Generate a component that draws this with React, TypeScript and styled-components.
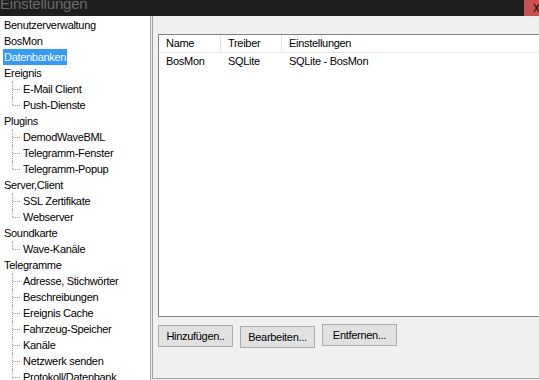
import React from 'react';
import styled, { createGlobalStyle } from 'styled-components';

const GlobalStyle = createGlobalStyle`
  html, body {
    margin: 0;
    padding: 0;
    overflow: hidden;
    background: #f0f0f0;
  }
  * {
    box-sizing: border-box;
  }
`;

const Window = styled.div`
  width: 539px;
  height: 380px;
  display: flex;
  flex-direction: column;
  font-family: 'Liberation Sans', Arial, sans-serif;
  font-size: 11px;
  letter-spacing: -0.3px;
  color: #000;
  overflow: hidden;
`;

const TitleBar = styled.div`
  height: 16px;
  flex: none;
  display: flex;
  background: #1f1f1f;
  overflow: hidden;
`;

const TitleText = styled.div`
  flex: 1;
  margin-top: -5px;
  font-size: 15px;
  letter-spacing: -0.2px;
  line-height: 18px;
  color: #6a6a6a;
  white-space: nowrap;
`;

const CloseButton = styled.div`
  width: 15px;
  background: #c75050;
  color: #111;
  font-size: 14px;
  line-height: 14px;
  padding-left: 9px;
  overflow: hidden;
`;

const Body = styled.div`
  flex: 1;
  display: flex;
  min-height: 0;
`;

const Tree = styled.div`
  width: 151px;
  flex: none;
  padding-top: 1px;
  background: #fff;
  border-right: 1px solid #a0a0a0;
  overflow: hidden;
`;

const TreeRow = styled.div<{ $child?: boolean; $last?: boolean }>`
  position: relative;
  height: 16px;
  line-height: 16px;
  padding-left: ${(p) => (p.$child ? 22 : 3)}px;
  white-space: nowrap;

  ${(p) =>
    p.$child &&
    `
    &::before {
      content: '';
      position: absolute;
      left: 12px;
      top: 0;
      height: ${p.$last ? 8 : 16}px;
      border-left: 1px dotted #a0a0a0;
    }
    &::after {
      content: '';
      position: absolute;
      left: 13px;
      top: 8px;
      width: 7px;
      border-top: 1px dotted #a0a0a0;
    }
  `}
`;

const TreeLabel = styled.span<{ $selected?: boolean }>`
  display: inline-block;
  padding: 0 1px;
  background: ${(p) => (p.$selected ? '#3399ff' : 'transparent')};
  color: ${(p) => (p.$selected ? '#fff' : '#000')};
`;

const Gap = styled.div`
  width: 1px;
  flex: none;
  background: #f0f0f0;
`;

const Panel = styled.div`
  flex: 1;
  min-width: 0;
  display: flex;
  flex-direction: column;
  border-left: 1px solid #a0a0a0;
  border-bottom: 1px solid #a0a0a0;
  margin-bottom: 1px;
  padding: 18px 0 0 5px;
  overflow: hidden;
`;

const ListView = styled.div`
  height: 283px;
  margin-right: -20px;
  background: #fff;
  border: 1px solid #828282;
  flex: none;
`;

const HeaderRow = styled.div`
  display: flex;
  height: 18px;
  border-bottom: 1px solid #e5e5e5;
`;

const HeaderCell = styled.div<{ $width?: number }>`
  width: ${(p) => (p.$width ? `${p.$width}px` : 'auto')};
  flex: ${(p) => (p.$width ? 'none' : '1')};
  padding-left: 7px;
  line-height: 17px;
  border-right: 1px solid #e5e5e5;
  white-space: nowrap;
`;

const DataRow = styled.div`
  display: flex;
  height: 17px;
  line-height: 17px;
`;

const DataCell = styled.div<{ $width?: number }>`
  width: ${(p) => (p.$width ? `${p.$width}px` : 'auto')};
  flex: ${(p) => (p.$width ? 'none' : '1')};
  padding-left: 7px;
  white-space: nowrap;
`;

const ButtonBar = styled.div`
  display: flex;
  align-items: flex-start;
  gap: 7px;
  margin-top: 8px;
`;

const Button = styled.div<{ $shift?: number }>`
  width: 75px;
  height: 22px;
  margin-top: ${(p) => p.$shift ?? 0}px;
  background: #e1e1e1;
  border: 1px solid #adadad;
  display: flex;
  align-items: center;
  justify-content: center;
  white-space: nowrap;
`;

type Node = { label: string; children?: string[]; selected?: boolean };

const tree: Node[] = [
  { label: 'Benutzerverwaltung' },
  { label: 'BosMon' },
  { label: 'Datenbanken', selected: true },
  { label: 'Ereignis', children: ['E-Mail Client', 'Push-Dienste'] },
  { label: 'Plugins', children: ['DemodWaveBML', 'Telegramm-Fenster', 'Telegramm-Popup'] },
  { label: 'Server,Client', children: ['SSL Zertifikate', 'Webserver'] },
  { label: 'Soundkarte', children: ['Wave-Kanäle'] },
  {
    label: 'Telegramme',
    children: [
      'Adresse, Stichwörter',
      'Beschreibungen',
      'Ereignis Cache',
      'Fahrzeug-Speicher',
      'Kanäle',
      'Netzwerk senden',
      'Protokoll/Datenbank',
      'Statistik',
    ],
  },
];

const App: React.FC = () => {
  return (
    <>
      <GlobalStyle />
      <Window>
        <TitleBar>
          <TitleText>Einstellungen</TitleText>
          <CloseButton>x</CloseButton>
        </TitleBar>
        <Body>
          <Tree>
            {tree.map((node) => (
              <React.Fragment key={node.label}>
                <TreeRow>
                  <TreeLabel $selected={node.selected}>{node.label}</TreeLabel>
                </TreeRow>
                {node.children?.map((child, i) => (
                  <TreeRow key={child} $child $last={i === node.children!.length - 1}>
                    <TreeLabel>{child}</TreeLabel>
                  </TreeRow>
                ))}
              </React.Fragment>
            ))}
          </Tree>
          <Gap />
          <Panel>
            <ListView>
              <HeaderRow>
                <HeaderCell $width={62}>Name</HeaderCell>
                <HeaderCell $width={61}>Treiber</HeaderCell>
                <HeaderCell>Einstellungen</HeaderCell>
              </HeaderRow>
              <DataRow>
                <DataCell $width={62}>BosMon</DataCell>
                <DataCell $width={61}>SQLite</DataCell>
                <DataCell>SQLite - BosMon</DataCell>
              </DataRow>
            </ListView>
            <ButtonBar>
              <Button>Hinzufügen..</Button>
              <Button $shift={1}>Bearbeiten...</Button>
              <Button $shift={-1}>Entfernen...</Button>
            </ButtonBar>
          </Panel>
        </Body>
      </Window>
    </>
  );
};

export default App;
